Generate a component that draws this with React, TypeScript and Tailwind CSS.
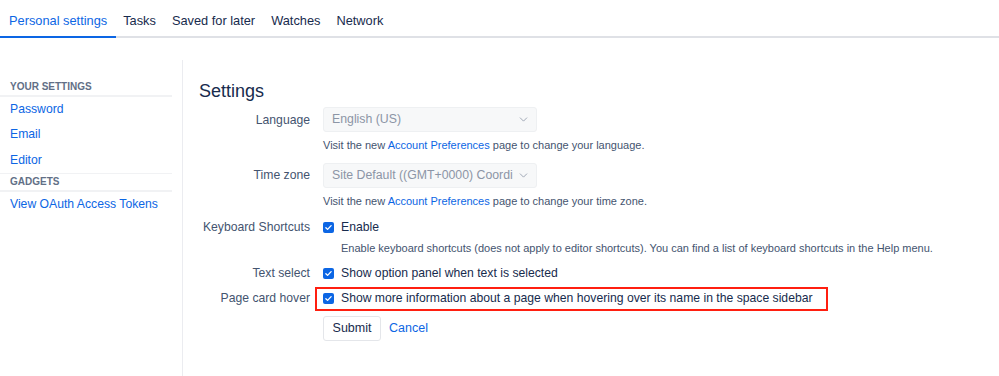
import { ChevronDown } from "lucide-react";

const tabs = ["Personal settings", "Tasks", "Saved for later", "Watches", "Network"];

function Check() {
	return (
		<span className="inline-flex items-center justify-center w-[11px] h-[11px] rounded-[2px] bg-[#0c66e4] shrink-0">
			<svg viewBox="0 0 12 12" className="w-[9px] h-[9px]">
				<path d="M2.5 6.2l2.3 2.3 4.7-5" fill="none" stroke="#fff" strokeWidth="1.8" strokeLinecap="round" strokeLinejoin="round" />
			</svg>
		</span>
	);
}

function Select({ value }: { value: string }) {
	return (
		<div className="flex items-center w-[214px] h-[25px] pl-[8px] pr-[6px] gap-1 rounded-[3px] border border-[#eef0f2] bg-[#f7f8f9] text-[#8c95a6] text-[12.3px]">
			<span className="flex-1 overflow-hidden whitespace-nowrap">{value}</span>
			<ChevronDown className="w-[13px] h-[13px] text-[#8c95a6] shrink-0" strokeWidth={1.5} />
		</div>
	);
}

function Help({ what }: { what: string }) {
	return (
		<p className="text-[11px] text-[#44546f] mt-[5px] whitespace-nowrap">
			Visit the new <a className="text-[#0c66e4]">Account Preferences</a> page to change your {what}.
		</p>
	);
}

const label = "text-[#44546f] flex items-center justify-end whitespace-nowrap";

export default function App() {
	return (
		<div className="w-[999px] h-[376px] bg-white text-[#172b4d] font-['Liberation_Sans',Arial,sans-serif] overflow-hidden">
			<nav className="flex h-[38px] border-b-2 border-[#dfe1e6] px-[9px] gap-[16px] text-[12.8px]">
				{tabs.map((t, i) => (
					<div
						key={t}
						className={
							i === 0
								? "relative flex items-center pt-[6px] text-[#0c66e4] after:absolute after:-left-[9px] after:-right-[9px] after:-bottom-[2px] after:h-[2px] after:bg-[#0c66e4]"
								: "flex items-center pt-[6px] text-[#172b4d]"
						}
					>
						{t}
					</div>
				))}
			</nav>

			<div className="flex">
				<aside className="w-[182px] pt-[43px] pr-[9px]">
					<div className="w-[172px]">
						<h3 className="px-[10px] h-[12px] leading-[12px] text-[10px] font-bold text-[#626f86] border-b-2 border-[#f1f2f4] pb-[2px] box-content">
							YOUR SETTINGS
						</h3>
						<ul className="text-[12.2px] text-[#0c66e4] px-[10px]">
							<li className="h-[24px] flex items-center">Password</li>
							<li className="h-[26px] flex items-center">Email</li>
							<li className="h-[26px] flex items-center">Editor</li>
						</ul>
						<h3 className="px-[10px] h-[12px] leading-[12px] text-[10px] font-bold text-[#626f86] border-t border-b-2 border-[#f1f2f4] pt-[2px] pb-[2px] box-content">
							GADGETS
						</h3>
						<ul className="text-[12.2px] text-[#0c66e4] px-[10px]">
							<li className="h-[24px] flex items-center whitespace-nowrap">View OAuth Access Tokens</li>
						</ul>
					</div>
				</aside>

				<main className="flex-1 border-l border-[#ebecf0] mt-[22px] pl-[16px] pt-[21px] h-[320px]">
					<h1 className="text-[18px] font-medium leading-[20px] mb-[6px]">Settings</h1>

					<div className="grid grid-cols-[111px_1fr] gap-x-[13px] text-[12.2px]">
						<label className={`${label} h-[25px] pt-[2px]`}>Language</label>
						<div>
							<Select value="English (US)" />
							<Help what="language" />
						</div>

						<label className={`${label} h-[25px] mt-[9px] pt-[1px]`}>Time zone</label>
						<div className="mt-[9px]">
							<Select value="Site Default ((GMT+0000) Coordinated Universal Time)" />
							<Help what="time zone" />
						</div>

						<label className={`${label} h-[20px] mt-[8px]`}>Keyboard Shortcuts</label>
						<div className="mt-[8px]">
							<div className="flex items-center gap-[7px] h-[20px]">
								<Check />
								<span>Enable</span>
							</div>
							<p className="text-[11px] text-[#44546f] ml-[18px] mt-[3px] whitespace-nowrap">
								Enable keyboard shortcuts (does not apply to editor shortcuts). You can find a list of keyboard shortcuts in the Help menu.
							</p>
						</div>

						<label className={`${label} h-[20px] mt-[7px]`}>Text select</label>
						<div className="mt-[7px] flex items-center gap-[7px] h-[20px]">
							<Check />
							<span>Show option panel when text is selected</span>
						</div>

						<label className={`${label} h-[24px] mt-[3px]`}>Page card hover</label>
						<div className="mt-[3px] -ml-[8px] w-[513px] h-[24px] border-2 border-[#ff1f10] flex items-center gap-[7px] pl-[6px] whitespace-nowrap">
							<Check />
							<span>Show more information about a page when hovering over its name in the space sidebar</span>
						</div>

						<div />
						<div className="flex items-center gap-[8px] mt-[5px]">
							<button className="h-[25px] w-[58px] rounded-[3px] border border-[#e4e6ea] bg-white text-[12.5px] text-[#172b4d]">
								Submit
							</button>
							<a className="text-[#0c66e4] text-[12.5px]">Cancel</a>
						</div>
					</div>
				</main>
			</div>
		</div>
	);
}
